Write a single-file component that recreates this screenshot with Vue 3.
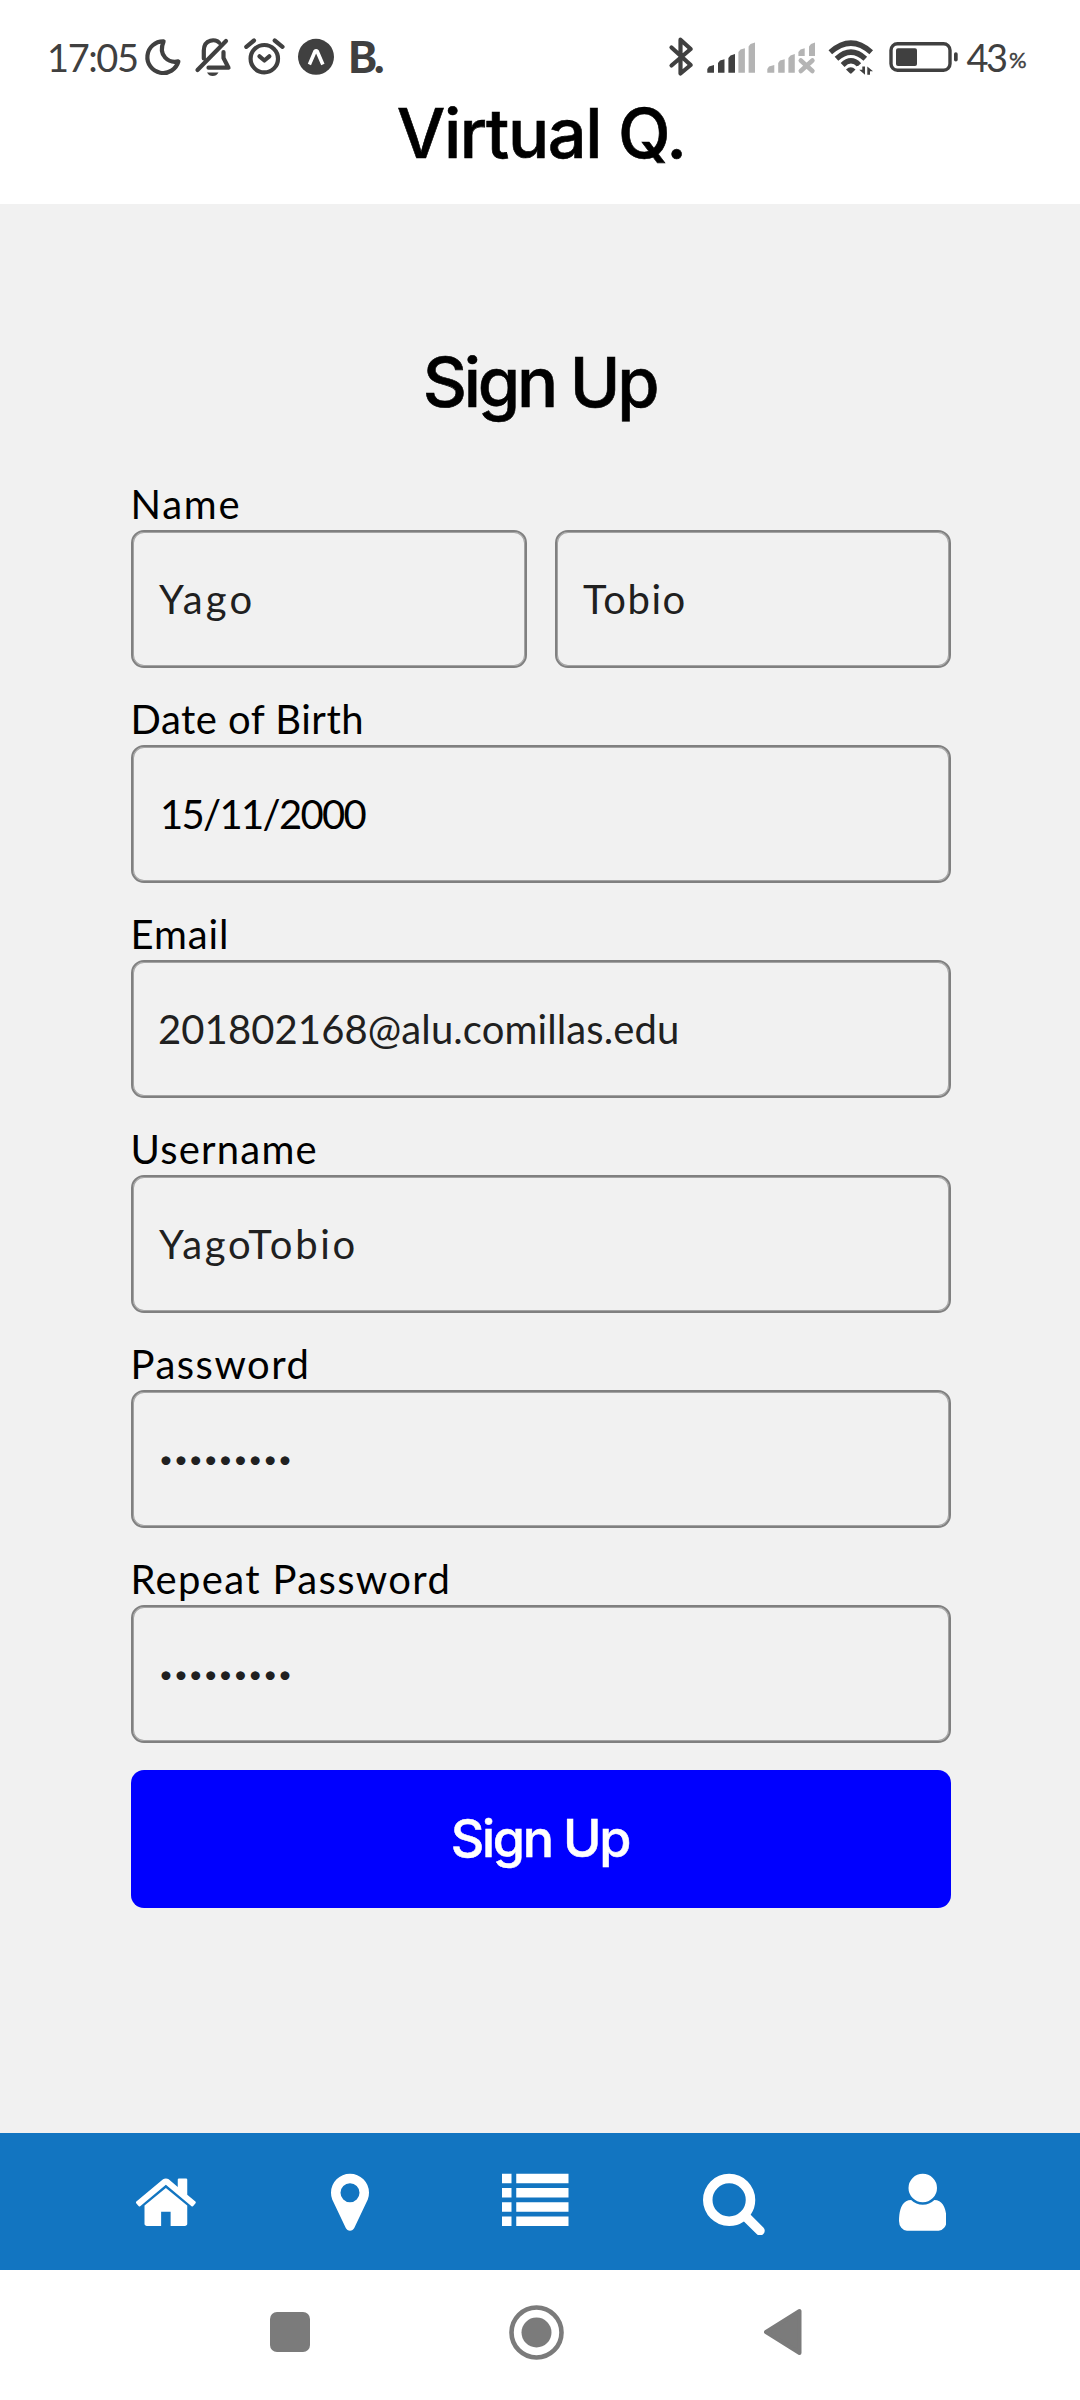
<script setup>
// Spaces a line of text so that its ink fills exactly the given width in px.
const fit = (el, width) => {
  const style = getComputedStyle(el)
  const ctx = document.createElement('canvas').getContext('2d')
  ctx.font = `${style.fontWeight} ${style.fontSize} ${style.fontFamily}`
  const text = el.textContent
  const m = ctx.measureText(text)
  const ink = m.actualBoundingBoxLeft + m.actualBoundingBoxRight
  const gap = (width - ink) / (text.length - 1)
  el.style.letterSpacing = `${gap}px`
  el.style.marginLeft = `${m.actualBoundingBoxLeft}px`
  el.style.marginRight = `${m.actualBoundingBoxRight - m.width - gap}px`
}
const vFit = { mounted: (el, { value }) => fit(el, value) }

const fields = [
  { label: 'Name', width: 105, inputs: [{ text: 'Yago', width: 91.5 }, { text: 'Tobio', width: 100.5 }] },
  { label: 'Date of Birth', width: 228.5, inputs: [{ text: '15/11/2000', width: 202.5, kind: 'date' }] },
  { label: 'Email', width: 92.5, inputs: [{ text: '201802168@alu.comillas.edu', width: 518 }] },
  { label: 'Username', width: 182, inputs: [{ text: 'YagoTobio', width: 194.5 }] },
  { label: 'Password', width: 173, inputs: [{ text: '•••••••••', width: 129, kind: 'secret' }] },
  { label: 'Repeat Password', width: 314, inputs: [{ text: '•••••••••', width: 129, kind: 'secret' }] }
]

const tabs = [
  { name: 'home', x: 64, w: 1664, d: 'M1472 992v480q0 26-19 45t-45 19h-384v-384h-256v384h-384q-26 0-45-19t-19-45v-480q0-1 .5-3t.5-3l575-474 575 474q1 2 1 6zm223-69l-62 74q-8 9-21 11h-3q-13 0-21-7l-692-577-692 577q-12 8-24 7-13-2-21-11l-62-74q-8-10-7-23.5t11-21.5l719-599q32-26 76-26t76 26l244 204v-195q0-14 9-23t23-9h192q14 0 23 9t9 23v408l219 182q10 8 11 21.5t-7 23.5z' },
  { name: 'places', x: 384, w: 1024, d: 'M1152 640q0-106-75-181t-181-75-181 75-75 181 75 181 181 75 181-75 75-181zm256 0q0 109-33 179l-364 774q-16 33-47.5 52t-67.5 19-67.5-19-46.5-52l-365-774q-33-70-33-179 0-212 150-362t362-150 362 150 150 362z' },
  { name: 'list', x: 0, w: 1792, d: 'M0 128h256v256h-256zM384 128h1408v256h-1408zM0 512h256v256h-256zM384 512h1408v256h-1408zM0 896h256v256h-256zM384 896h1408v256h-1408zM0 1280h256v256h-256zM384 1280h1408v256h-1408z' },
  { name: 'search', x: 64, w: 1664, d: 'M1216 832q0-185-131.5-316.5t-316.5-131.5-316.5 131.5-131.5 316.5 131.5 316.5 316.5 131.5 316.5-131.5 131.5-316.5zm512 832q0 52-38 90t-90 38q-54 0-90-38l-343-342q-179 124-399 124-143 0-273.5-55.5t-225-150-150-225-55.5-273.5 55.5-273.5 150-225 225-150 273.5-55.5 273.5 55.5 225 150 150 225 55.5 273.5q0 220-124 399l343 343q37 37 37 90z' },
  { name: 'profile', x: 256, w: 1280, d: 'M1536 1399q0 109-62.5 187t-150.5 78h-854q-88 0-150.5-78t-62.5-187q0-85 8.5-160.5t31.5-152 58.5-131 94-89 134.5-34.5q131 128 313 128t313-128q76 0 134.5 34.5t94 89 58.5 131 31.5 152 8.5 160.5zm-256-887q0 159-112.5 271.5t-271.5 112.5-271.5-112.5-112.5-271.5 112.5-271.5 271.5-112.5 271.5 112.5 112.5 271.5z' }
]
</script>

<template>
  <div class="screen">
    <header class="top">
      <div class="status">
        <div class="side">
          <span v-fit="87" class="clock">17:05</span>
          <svg class="moon" width="44" height="44" viewBox="142 35 44 44">
            <path class="line" d="M163.6 41.4A15.8 15.8 0 1 0 178.4 61.4C169 63.500 157.500 56 163.600 41.400Z" />
          </svg>
          <svg width="46" height="44" viewBox="190 35 46 44">
            <path class="line" d="M197.500 70L226 41M203.800 58.500V50.500C204 38.500 216 39 219 42.500M223.500 52V58L228.500 67.700H208.500" />
            <path class="solid" d="M207 72.500H218.500Q216.500 76 212.700 76T207 72.500Z" />
          </svg>
          <svg width="52" height="44" viewBox="238 35 52 44">
            <circle class="line" cx="264.300" cy="58.700" r="13.700" />
            <path class="line" d="M246.300 46.800L254 40.500M274.700 40.500L282.500 46.800M259.500 56.300L264.400 60.500L269.300 56.300" />
          </svg>
          <svg width="44" height="44" viewBox="294 35 44 44">
            <circle class="solid" cx="316" cy="56.800" r="18" />
            <path d="M307.800 63.700L313.500 50.300Q316.100 47.500 318.700 50.300L324.500 63.700L321.200 65.300L316.100 53.500L311 65.300Z" fill="#fff" />
          </svg>
          <span v-fit="32" class="brand">B.</span>
        </div>
        <div class="side right">
          <svg width="34" height="44" viewBox="665 35 34 44">
            <path class="line" d="M671.500 47.500L690.700 65L680.500 73.500V39.700L690.700 49L671.500 65.500" />
          </svg>
          <svg width="54" height="44" viewBox="703 35 54 44">
            <path class="solid" d="M707.300 72.700V69L709 66.500L714 65V72.700ZM718 72.700V63L720 60.500L724.500 59.300V72.700ZM728.400 72.700V58L730.500 55.500L735 54V72.700Z" />
            <path class="faint" d="M738.400 72.700V52L740.500 49.500L744.900 48.300V72.700ZM748.600 72.700V46.500L750.500 44L755 42.500V72.700Z" />
          </svg>
          <svg width="54" height="44" viewBox="763 35 54 44">
            <path class="faint" d="M767.300 72.700V69L769 66.500L774.300 65V72.700ZM778.200 72.700V63L780 60.500L784.700 59.300V72.700ZM788.400 72.700V58L790.500 55.500L794.800 54V72.700ZM798.400 56V52L800.500 49.500L804.700 48.300V56ZM809 56V46.500L811 44L815 42.500V56Z" />
            <path class="cross" d="M800.800 60.500L812.400 71M812.400 60.500L800.800 71" />
          </svg>
          <svg width="50" height="44" viewBox="826 35 50 44">
            <path class="wave" d="M830.300 52.300Q851 34 871.200 52.300M836.500 58.700Q851 45.500 865.300 58.700M842.600 65Q851 56.500 859.200 65" />
            <path class="solid" d="M846 69.500Q850.800 65 855.500 69.500L851.700 73.300Q850.800 74 849.900 73.300Z" />
            <path d="M857 66H874V76H857Z" fill="#fff" />
            <path class="solid" d="M862.300 66.500H865V74.700L859.200 69.700H862.300ZM867.300 74.700V66.500L873 71.300H870V74.700Z" />
          </svg>
          <svg class="battery" width="74" height="44" viewBox="886 35 74 44">
            <rect class="shell" x="891" y="43.700" width="59" height="26.600" rx="6.500" />
            <rect class="solid" x="896" y="48.300" width="21" height="17.800" rx="2" />
            <rect class="solid" x="954" y="52.300" width="3.700" height="9.200" rx="1.800" />
          </svg>
          <span v-fit="39.5" class="clock">43</span>
          <span class="percent">%</span>
        </div>
      </div>
      <h1 v-fit="284.5" class="title app-name">Virtual Q.</h1>
    </header>

    <main class="page">
      <h2 v-fit="231.5" class="title">Sign Up</h2>
      <form class="form">
        <div v-for="field in fields" :key="field.label" class="field">
          <div class="label"><span v-fit="field.width">{{ field.label }}</span></div>
          <div class="row">
            <div v-for="input in field.inputs" :key="input.text" class="input" :class="input.kind">
              <span v-fit="input.width">{{ input.text }}</span>
            </div>
          </div>
        </div>
        <div class="submit"><span v-fit="176.5">Sign Up</span></div>
      </form>
    </main>

    <nav class="tabs">
      <svg v-for="tab in tabs" :key="tab.name" :width="tab.w * 66.5 / 1792" height="66.5" :viewBox="`${tab.x} 0 ${tab.w} 1792`">
        <path :d="tab.d" fill="#fff" />
      </svg>
    </nav>

    <footer class="system">
      <svg width="40" height="40" viewBox="0 0 40 40"><rect width="40" height="40" rx="7" /></svg>
      <svg width="55" height="55" viewBox="0 0 55 55">
        <circle class="ring" cx="27.500" cy="27.500" r="25" />
        <circle cx="27.500" cy="27.500" r="15" />
      </svg>
      <svg width="38" height="48" viewBox="0 0 38 48"><path class="back" d="M2 24L35.500 3V45Z" /></svg>
    </footer>
  </div>
</template>

<style>
body {
  background: #fff;
}
</style>

<style scoped>
.screen {
  width: 1080px;
  height: 2400px;
  display: flex;
  flex-direction: column;
  background: #fff;
  color: #000;
  font-family: Lato, "Open Sans", sans-serif;
  overflow: hidden;
}
svg {
  display: block;
  flex: none;
}
.top {
  height: 204px;
  display: flex;
  flex-direction: column;
  align-items: center;
}
.status {
  width: 100%;
  height: 79px;
  box-sizing: border-box;
  padding: 35px 54px 0 50px;
  display: flex;
  justify-content: space-between;
  color: #404040;
}
.side {
  display: flex;
  height: 44px;
  line-height: 44px;
  white-space: nowrap;
}
.clock {
  font-size: 38px;
}
.moon {
  margin: 0 4px 0 5px;
}
.side svg + svg {
  margin-left: 4px;
}
.side .moon + svg {
  margin-left: 0;
}
.side svg:nth-of-type(3) {
  margin-left: 2px;
}
.brand {
  padding-left: 13px;
  font-weight: 900;
  font-size: 44px;
  line-height: 43px;
}
.right svg:nth-of-type(3) {
  margin-left: 6px;
}
.right svg:nth-of-type(4) {
  margin-left: 9px;
}
.right .battery {
  margin: 0 7px 0 10px;
}
.percent {
  width: 17px;
  margin-left: 3px;
  padding-top: 3px;
  font-size: 22px;
  -webkit-text-stroke: 0.400px #404040;
}
.line {
  fill: none;
  stroke: #404040;
  stroke-width: 4.2;
  stroke-linecap: round;
  stroke-linejoin: round;
}
.solid {
  fill: #404040;
}
.faint {
  fill: #b4b4b4;
}
.cross {
  stroke: #b4b4b4;
  stroke-width: 4.600;
  stroke-linecap: round;
}
.wave {
  fill: none;
  stroke: #404040;
  stroke-width: 5.400;
}
.shell {
  fill: none;
  stroke: #404040;
  stroke-width: 3.400;
}
.title {
  margin-top: 0;
  margin-bottom: 0;
  font-family: Inter, sans-serif;
  font-size: 68.500px;
  line-height: 86px;
  height: 80px;
  font-weight: 500;
  white-space: nowrap;
  -webkit-text-stroke: 0.600px #000;
}
.app-name {
  margin-top: 12px;
}
.page {
  height: 1929px;
  box-sizing: border-box;
  padding-top: 136px;
  background: #f1f1f1;
  display: flex;
  flex-direction: column;
  align-items: center;
}
.page .title {
  padding-left: 3px;
}
.form {
  width: 820px;
  margin: 33px 0 0 2px;
}
.field {
  height: 188px;
  margin-top: 27px;
}
.label {
  height: 50px;
  padding-left: 2.500px;
  box-sizing: border-box;
  display: flex;
  font-size: 40px;
  line-height: 49px;
  white-space: nowrap;
}
.row {
  display: flex;
  gap: 28px;
}
.input {
  flex: 1;
  height: 138px;
  box-sizing: border-box;
  padding-left: 26px;
  border: 2px solid #808080;
  border-radius: 13px;
  box-shadow: inset 0 0 0 1px #a4a4a4;
  display: flex;
  color: #202020;
  font-size: 40px;
  line-height: 134px;
  white-space: nowrap;
}
.date {
  padding-left: 30px;
  color: #000;
}
.secret {
  padding-left: 28px;
  font-size: 24px;
}
.submit {
  height: 138px;
  margin-top: 27px;
  border-radius: 13px;
  background: #00f;
  color: #fff;
  display: flex;
  justify-content: center;
  font-family: Inter, sans-serif;
  font-weight: 500;
  font-size: 52px;
  line-height: 138px;
  white-space: nowrap;
  -webkit-text-stroke: 0.500px #fff;
}
.tabs {
  height: 137px;
  box-sizing: border-box;
  padding: 1px 0 0 1px;
  display: flex;
  align-items: center;
  justify-content: space-evenly;
  background: #1275c1;
}
.system {
  height: 130px;
  box-sizing: border-box;
  padding: 0 278.500px 6px 269.500px;
  display: flex;
  align-items: center;
  justify-content: space-between;
  fill: #7b7b7b;
}
.ring {
  fill: none;
  stroke: #7b7b7b;
  stroke-width: 4.600;
}
.back {
  stroke: #7b7b7b;
  stroke-width: 4;
  stroke-linejoin: round;
}
</style>
